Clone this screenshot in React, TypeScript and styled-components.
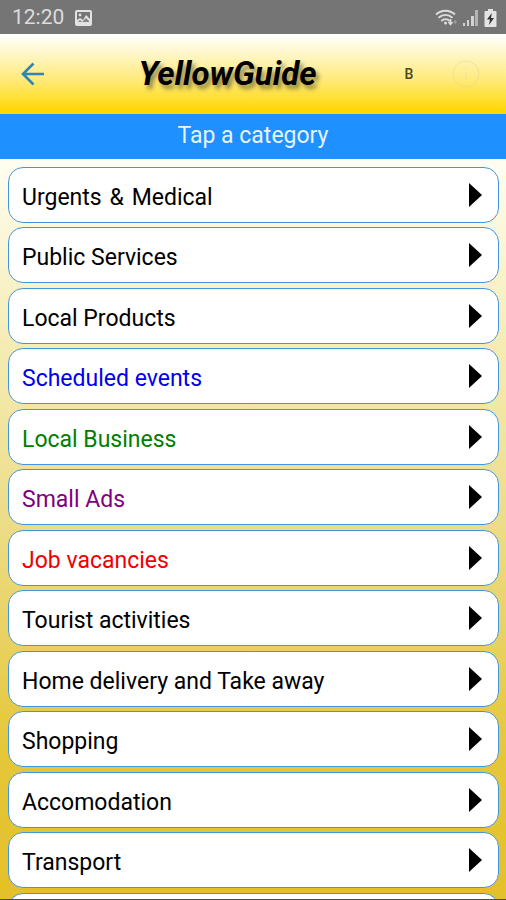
import React from "react";
import styled, { createGlobalStyle } from "styled-components";

const GlobalStyle = createGlobalStyle`
  * { box-sizing: border-box; }
  body { margin: 0; font-family: Roboto, sans-serif; }
`;

const Page = styled.div`
  display: flex;
  flex-direction: column;
  height: 100vh;
  overflow: hidden;
  border-bottom: 1px solid #4b4b4b;
`;

const StatusBar = styled.div`
  display: flex;
  flex: none;
  align-items: center;
  height: 34px;
  padding: 1px 9px 0 12px;
  background: #757575;
  color: #dcdcdc;
`;

const Clock = styled.span`
  font-size: 21px;
  line-height: 33px;
  margin-right: 11px;
`;

const StatusIcons = styled.div`
  display: flex;
  align-items: center;
  gap: 5px;
  margin-left: auto;
`;

const Header = styled.header`
  display: grid;
  grid-template-columns: 66px 1fr 117px;
  flex: none;
  align-items: center;
  height: 80px;
  background: linear-gradient(#ffffff 0%, #fff6c8 25%, #ffea78 58%, #ffd700 97%);
`;

const IconButton = styled.button`
  display: flex;
  align-items: center;
  justify-content: center;
  width: 32px;
  height: 32px;
  padding: 0;
  border: 0;
  background: none;
`;

const BackButton = styled(IconButton)`
  margin-left: 17px;
`;

const Title = styled.h1`
  margin: 0;
  font-size: 33px;
  font-style: italic;
  font-weight: 700;
  line-height: 40px;
  color: #000;
  text-align: center;
  text-shadow: 3px 4px 4px rgba(70, 70, 40, 0.6);
`;

const Actions = styled.div`
  display: flex;
  align-items: center;
  justify-content: flex-end;
  gap: 25px;
  padding-right: 24px;
`;

const LetterButton = styled(IconButton)`
  font: 500 14px Roboto, sans-serif;
  color: #4d451f;
`;

const Banner = styled.h2`
  flex: none;
  height: 45px;
  margin: 0;
  padding-top: 8px;
  background: #1e90ff;
  color: #e6f3ff;
  font-size: 23px;
  font-weight: 400;
  line-height: 28px;
  text-align: center;
`;

const List = styled.nav`
  display: flex;
  flex: 1;
  flex-direction: column;
  gap: 4px;
  min-height: 0;
  padding: 8px 7px 0 8px;
  overflow: hidden;
  background: linear-gradient(#fffef2 0%, #f5ecb4 25%, #ecdc86 50%, #e5c73a 80%, #e4c02a 100%);
`;

const Row = styled.button<{ $color?: string }>`
  display: flex;
  flex: none;
  align-items: center;
  justify-content: space-between;
  height: 56px;
  padding: 4px 15px 0 13px;
  border: 1px solid #4496dc;
  border-radius: 15px;
  background: #fff;
  color: ${(p) => p.$color ?? "#000"};
  font: 400 23px Roboto, sans-serif;
  text-align: left;
  white-space: pre;

  &:nth-child(even) {
    margin-bottom: 1px;
  }
`;

const Arrow = styled.svg`
  flex: none;
  margin-bottom: 4px;
`;

const categories: { label: string; color?: string }[] = [
  { label: "Urgents\u2004&\u2004Medical" },
  { label: "Public Services" },
  { label: "Local Products" },
  { label: "Scheduled events", color: "#0000ee" },
  { label: "Local Business", color: "#008000" },
  { label: "Small Ads", color: "#800080" },
  { label: "Job vacancies", color: "#f00000" },
  { label: "Tourist activities" },
  { label: "Home delivery and Take away" },
  { label: "Shopping" },
  { label: "Accomodation" },
  { label: "Transport" },
  { label: "" },
];

export default function App() {
  return (
    <Page>
      <GlobalStyle />
      <StatusBar>
        <Clock>12:20</Clock>
        <svg width="17" height="16" viewBox="0 0 17 16" aria-hidden="true">
          <rect x="1" y="1" width="15" height="14" rx="1" fill="none" stroke="#e2e2e2" strokeWidth="2" />
          <circle cx="5" cy="5" r="1.4" fill="#e2e2e2" />
          <path d="M2 14V10l3-2 3 2 3-5 4 4v5z" fill="#e2e2e2" />
          <path d="M3 12l2-2 2 2 4-4 3 3v1z" fill="#858585" />
        </svg>
        <StatusIcons>
          <svg width="22" height="18" viewBox="0 0 22 18" fill="none" stroke="#dcdcdc" strokeWidth="1.9" aria-hidden="true">
            <path d="M1 5.500C6.500 .5 14.500 .5 20 5.500" />
            <path d="M3.500 8.700c4-3.800 10-3.800 14 0" />
            <path d="M6.300 12c2.500-2.400 5.900-2.400 8.400 0" />
            <circle cx="10.500" cy="14" r="1.500" fill="#dcdcdc" stroke="none" />
            <path d="M15.500 10v5m-2-2 2 2.500 2-2.500" strokeWidth="1.600" />
            <path d="M20 10.500l2 2.500-2 2.500-1.500-2.500z" fill="#999" stroke="none" />
          </svg>
          <svg width="17" height="17" viewBox="0 0 17 17" aria-hidden="true">
            <path d="M1 14h2v3H1zM5 11h2v6H5zM9 7h3v10H9z" fill="#d2d2d2" />
            <path d="M13 1h3v16h-3z" fill="#b4b4b4" />
          </svg>
          <svg width="13" height="18" viewBox="0 0 13 18" aria-hidden="true">
            <path d="M4 0h5v2h2.500q1 0 1 1v14q0 1-1 1h-10q-1 0-1-1V3q0-1 1-1H4z" fill="#e4e4e4" />
            <path d="M7.800 4 3 10.500h3L5 16l5-7H7z" fill="#333" />
          </svg>
        </StatusIcons>
      </StatusBar>
      <Header>
        <BackButton aria-label="Back">
          <svg width="24" height="24" viewBox="0 0 24 24" fill="none" stroke="#2f85b4" strokeWidth="2.600">
            <path d="M23 12H2M12.500 1.500 2 12l10.500 10.500" />
          </svg>
        </BackButton>
        <Title>YellowGuide</Title>
        <Actions>
          <LetterButton>B</LetterButton>
          <IconButton aria-label="Information">
            <svg width="28" height="28" viewBox="0 0 28 28" fill="none" stroke="#e6d48a" strokeOpacity=".55">
              <circle cx="14" cy="14" r="13" />
              <path d="M14 12v8M14 8v2" />
            </svg>
          </IconButton>
        </Actions>
      </Header>
      <Banner>Tap a category</Banner>
      <List aria-label="Categories">
        {categories.map((c, i) => (
          <Row key={i} $color={c.color}>
            {c.label}
            <Arrow width="14" height="24" viewBox="0 0 14 24" aria-hidden="true">
              <path d="M0 0l13 12L0 24z" fill="#000" />
            </Arrow>
          </Row>
        ))}
      </List>
    </Page>
  );
}
